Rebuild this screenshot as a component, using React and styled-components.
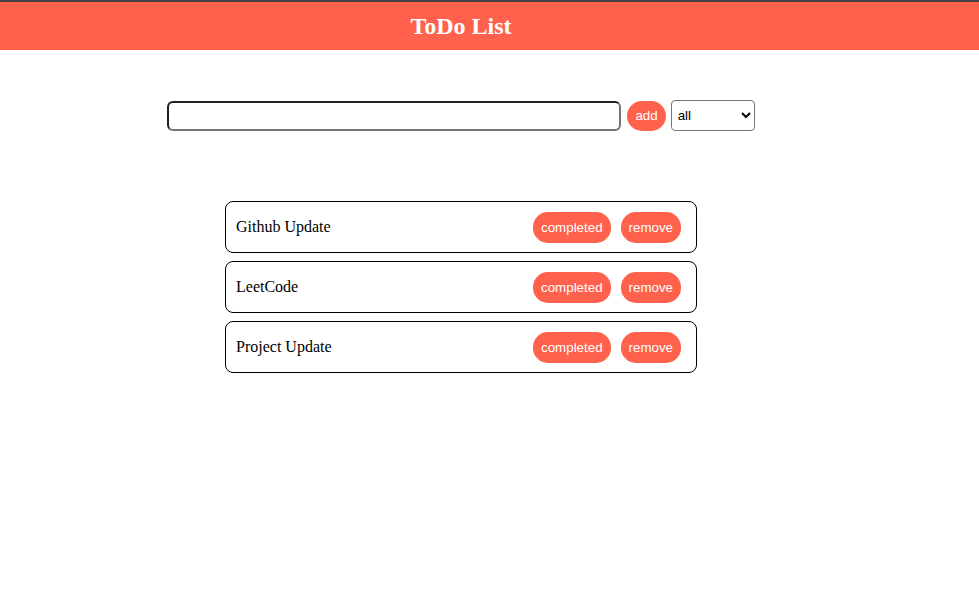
import React, { useState } from 'react';
import styled, { createGlobalStyle } from 'styled-components';

const GlobalStyle = createGlobalStyle`
  body {
    margin: 0;
    background: #ffffff;
    font-family: "Liberation Serif", "Times New Roman", serif;
  }
`;

const todos = ['Github Update', 'LeetCode', 'Project Update'];

export default function App() {
  const [text, setText] = useState('');

  return (
    <>
      <GlobalStyle />
      <TopLine />
      <Header>
        <Inner>
          <Title>ToDo List</Title>
        </Inner>
      </Header>

      <Inner>
        <Form onSubmit={(e) => e.preventDefault()}>
          <TextInput value={text} onChange={(e) => setText(e.target.value)} />
          <Pill type="submit">add</Pill>
          <Filter defaultValue="all">
            <option value="all">all</option>
            <option value="completed">completed</option>
            <option value="uncompleted">uncompleted</option>
          </Filter>
        </Form>

        <List>
          {todos.map((t) => (
            <Item key={t}>
              <Label>{t}</Label>
              <Actions>
                <Pill tall>completed</Pill>
                <Pill tall>remove</Pill>
              </Actions>
            </Item>
          ))}
        </List>
      </Inner>
    </>
  );
}

const TopLine = styled.div`
  height: 2px;
  background-color: #444444;
`;

const Header = styled.header`
  height: 48px;
  background-color: #ff614c;
`;

const Inner = styled.div`
  width: 922px;
  display: flex;
  flex-direction: column;
  align-items: center;
`;

const Title = styled.h1`
  margin: 0;
  line-height: 48px;
  font-size: 24px;
  font-weight: bold;
  color: #ffffff;
`;

const Form = styled.form`
  margin-top: 50px;
  display: flex;
  align-items: center;
  gap: 5px;
`;

const TextInput = styled.input`
  box-sizing: border-box;
  width: 454px;
  height: 30px;
  margin-right: 1px;
  border: 2px solid #1f1f1f;
  border-bottom-color: #767676;
  border-right-color: #767676;
  border-radius: 6px;
  outline: none;
  font-size: 14px;
`;

const Pill = styled.button`
  box-sizing: border-box;
  height: ${(p) => (p.tall ? '31px' : '30px')};
  padding: 0 8px;
  border: none;
  border-radius: 15px;
  background-color: #ff614c;
  color: #ffffff;
  font-family: "Liberation Sans", Arial, sans-serif;
  font-size: 13.33px;
  cursor: pointer;
`;

const Filter = styled.select`
  box-sizing: border-box;
  width: 84px;
  height: 31px;
  padding: 0 2px;
  border: 1px solid #767676;
  border-radius: 4px;
  background: #ffffff;
  color: #000000;
  font-family: "Liberation Sans", Arial, sans-serif;
  font-size: 13.33px;
`;

const List = styled.ul`
  list-style: none;
  margin: 70px 0 0;
  padding: 0;
  display: flex;
  flex-direction: column;
  gap: 8px;
`;

const Item = styled.li`
  box-sizing: border-box;
  width: 472px;
  height: 52px;
  padding: 0 15px 0 10px;
  border: 1px solid #000000;
  border-radius: 8px;
  display: flex;
  align-items: center;
  justify-content: space-between;
`;

const Label = styled.span`
  font-size: 16px;
  color: #000000;
`;

const Actions = styled.div`
  display: flex;
  gap: 10px;
`;
